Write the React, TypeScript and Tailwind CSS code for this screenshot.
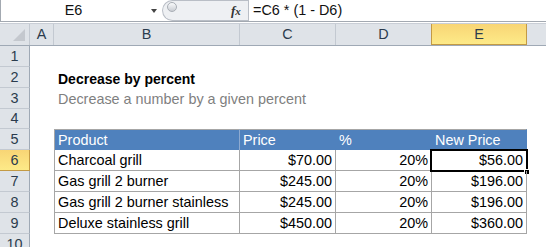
import React from 'react';

const grid = 'grid grid-cols-[30px_24px_186px_96px_96px_95px_1fr]';

type Item = { product: string; price: string; pct: string; next: string };

const items: Item[] = [
  { product: 'Charcoal grill', price: '$70.00', pct: '20%', next: '$56.00' },
  { product: 'Gas grill 2 burner', price: '$245.00', pct: '20%', next: '$196.00' },
  { product: 'Gas grill 2 burner stainless', price: '$245.00', pct: '20%', next: '$196.00' },
  { product: 'Deluxe stainless grill', price: '$450.00', pct: '20%', next: '$360.00' },
];

function FormulaBar() {
  return (
    <div className="flex h-[21px] border-l border-[#a3a9b1] bg-white">
      <div className="w-[145px] flex items-center justify-center text-[#111]">E6</div>
      <div className="w-[16px] flex items-center justify-center">
        <div className="w-0 h-0 border-l-[3px] border-r-[3px] border-t-[4px] border-l-transparent border-r-transparent border-t-[#444]" />
      </div>
      <div className="relative w-[86px] h-full rounded-l-full border border-r-0 border-[#b9bec6] bg-[#eef0f3]">
        <div className="absolute left-[4px] top-[1px] w-[10px] h-[10px] rounded-full border border-[#a9aeb5] bg-gradient-to-b from-[#fafbfc] to-[#c9cdd3]" />
        <span className="absolute left-[68px] top-[3px] font-['Liberation_Serif',serif] italic font-bold text-[13px] text-[#333]">
          f<span className="text-[11px]">x</span>
        </span>
      </div>
      <div className="w-px h-full bg-[#b9bec6]" />
      <div className="flex items-center pl-[4px] text-[#111]">=C6 * (1 - D6)</div>
    </div>
  );
}

function ColumnHeaders() {
  const letters = ['A', 'B', 'C', 'D'];
  return (
    <div className={`${grid} h-[22px] bg-[#dfe3e8] text-[#2b3b4d] border-b border-[#9fa9b5]`}>
      <div className="relative border-r border-[#c3c9d1]">
        <div className="absolute right-[4px] bottom-[4px] w-0 h-0 border-l-[12px] border-t-[12px] border-l-transparent border-t-transparent border-b-0 border-r-0 border-solid" style={{ borderRight: '0', borderBottom: '12px solid #c4c8ce', borderLeft: '12px solid transparent', borderTop: '0' }} />
      </div>
      {letters.map((l) => (
        <div key={l} className="flex items-center justify-center border-r border-[#c3c9d1]">
          {l}
        </div>
      ))}
      <div className="flex items-center justify-center border border-t-0 border-[#c39a45] bg-gradient-to-b from-[#f8d575] to-[#fdea88] -ml-px">
        E
      </div>
      <div />
    </div>
  );
}

function RowHead({ n, active }: { n: number; active?: boolean }) {
  return (
    <div
      className={`flex items-center justify-center border-r border-b ${
        active
          ? 'bg-gradient-to-b from-[#f8d575] to-[#fdea88] border-[#c39a45] text-[#2b3b4d]'
          : 'bg-[#dfe3e8] border-r-[#9fa9b5] border-b-[#c3c9d1] text-[#2b3b4d]'
      }`}
    >
      {n}
    </div>
  );
}

function Cell({ children, right, className = '' }: { children?: React.ReactNode; right?: boolean; className?: string }) {
  return (
    <div
      className={`flex items-center px-[3px] pt-px border-r border-b border-[#a6a6a6] whitespace-nowrap ${
        right ? 'justify-end' : ''
      } ${className}`}
    >
      {children}
    </div>
  );
}

export default function App() {
  return (
    <div className="w-[546px] h-[247px] overflow-hidden bg-white font-['Liberation_Sans',Arial,sans-serif] text-[14.4px] leading-none text-black">
      <FormulaBar />
      <div className="h-px bg-[#a3a9b1]" />
      <div className="h-px bg-white" />
      <div className="h-px bg-[#c9ced6]" />
      <ColumnHeaders />

      <div className={`${grid} h-[21px]`}>
        <RowHead n={1} />
      </div>
      <div className={`${grid} h-[21px]`}>
        <RowHead n={2} />
        <div />
        <div className="flex items-center pl-[4px] pt-[2px] font-bold text-[14px] whitespace-nowrap">Decrease by percent</div>
      </div>
      <div className={`${grid} h-[21px]`}>
        <RowHead n={3} />
        <div />
        <div className="flex items-center pl-[4px] pt-[2px] text-[#7f7f7f] whitespace-nowrap">Decrease a number by a given percent</div>
      </div>
      <div className={`${grid} h-[20px]`}>
        <RowHead n={4} />
      </div>
      <div className={`${grid} h-[21px]`}>
        <RowHead n={5} />
        <div />
        <div className="flex items-center px-[3px] pt-px bg-[#4f81bd] text-white border-t border-l border-r border-t-[#a6a6a6] border-l-[#a6a6a6] border-r-[#8eaad0]">Product</div>
        <div className="flex items-center px-[3px] pt-px bg-[#4f81bd] text-white border-t border-[#a6a6a6]">Price</div>
        <div className="flex items-center px-[3px] pt-px bg-[#4f81bd] text-white border-t border-[#a6a6a6]">%</div>
        <div className="flex items-center px-[3px] pt-px bg-[#4f81bd] text-white border-t border-r border-[#a6a6a6] border-r-[#4f81bd]">New Price</div>
      </div>
      {items.map((it, i) => (
        <div key={i} className={`${grid} h-[21px]`}>
          <RowHead n={6 + i} active={i === 0} />
          <div />
          <Cell className="border-l">{it.product}</Cell>
          <Cell right>{it.price}</Cell>
          <Cell right>{it.pct}</Cell>
          <div className="relative">
            <Cell right className="h-full">{it.next}</Cell>
            {i === 0 && (
              <>
                <div className="absolute -left-[2px] -top-px -right-px -bottom-px border-2 border-black" />
                <div className="absolute -right-[3px] -bottom-[4px] w-[6px] h-[6px] bg-black border border-white" />
              </>
            )}
          </div>
        </div>
      ))}
      <div className={`${grid} h-[21px]`}>
        <RowHead n={10} />
      </div>
    </div>
  );
}
